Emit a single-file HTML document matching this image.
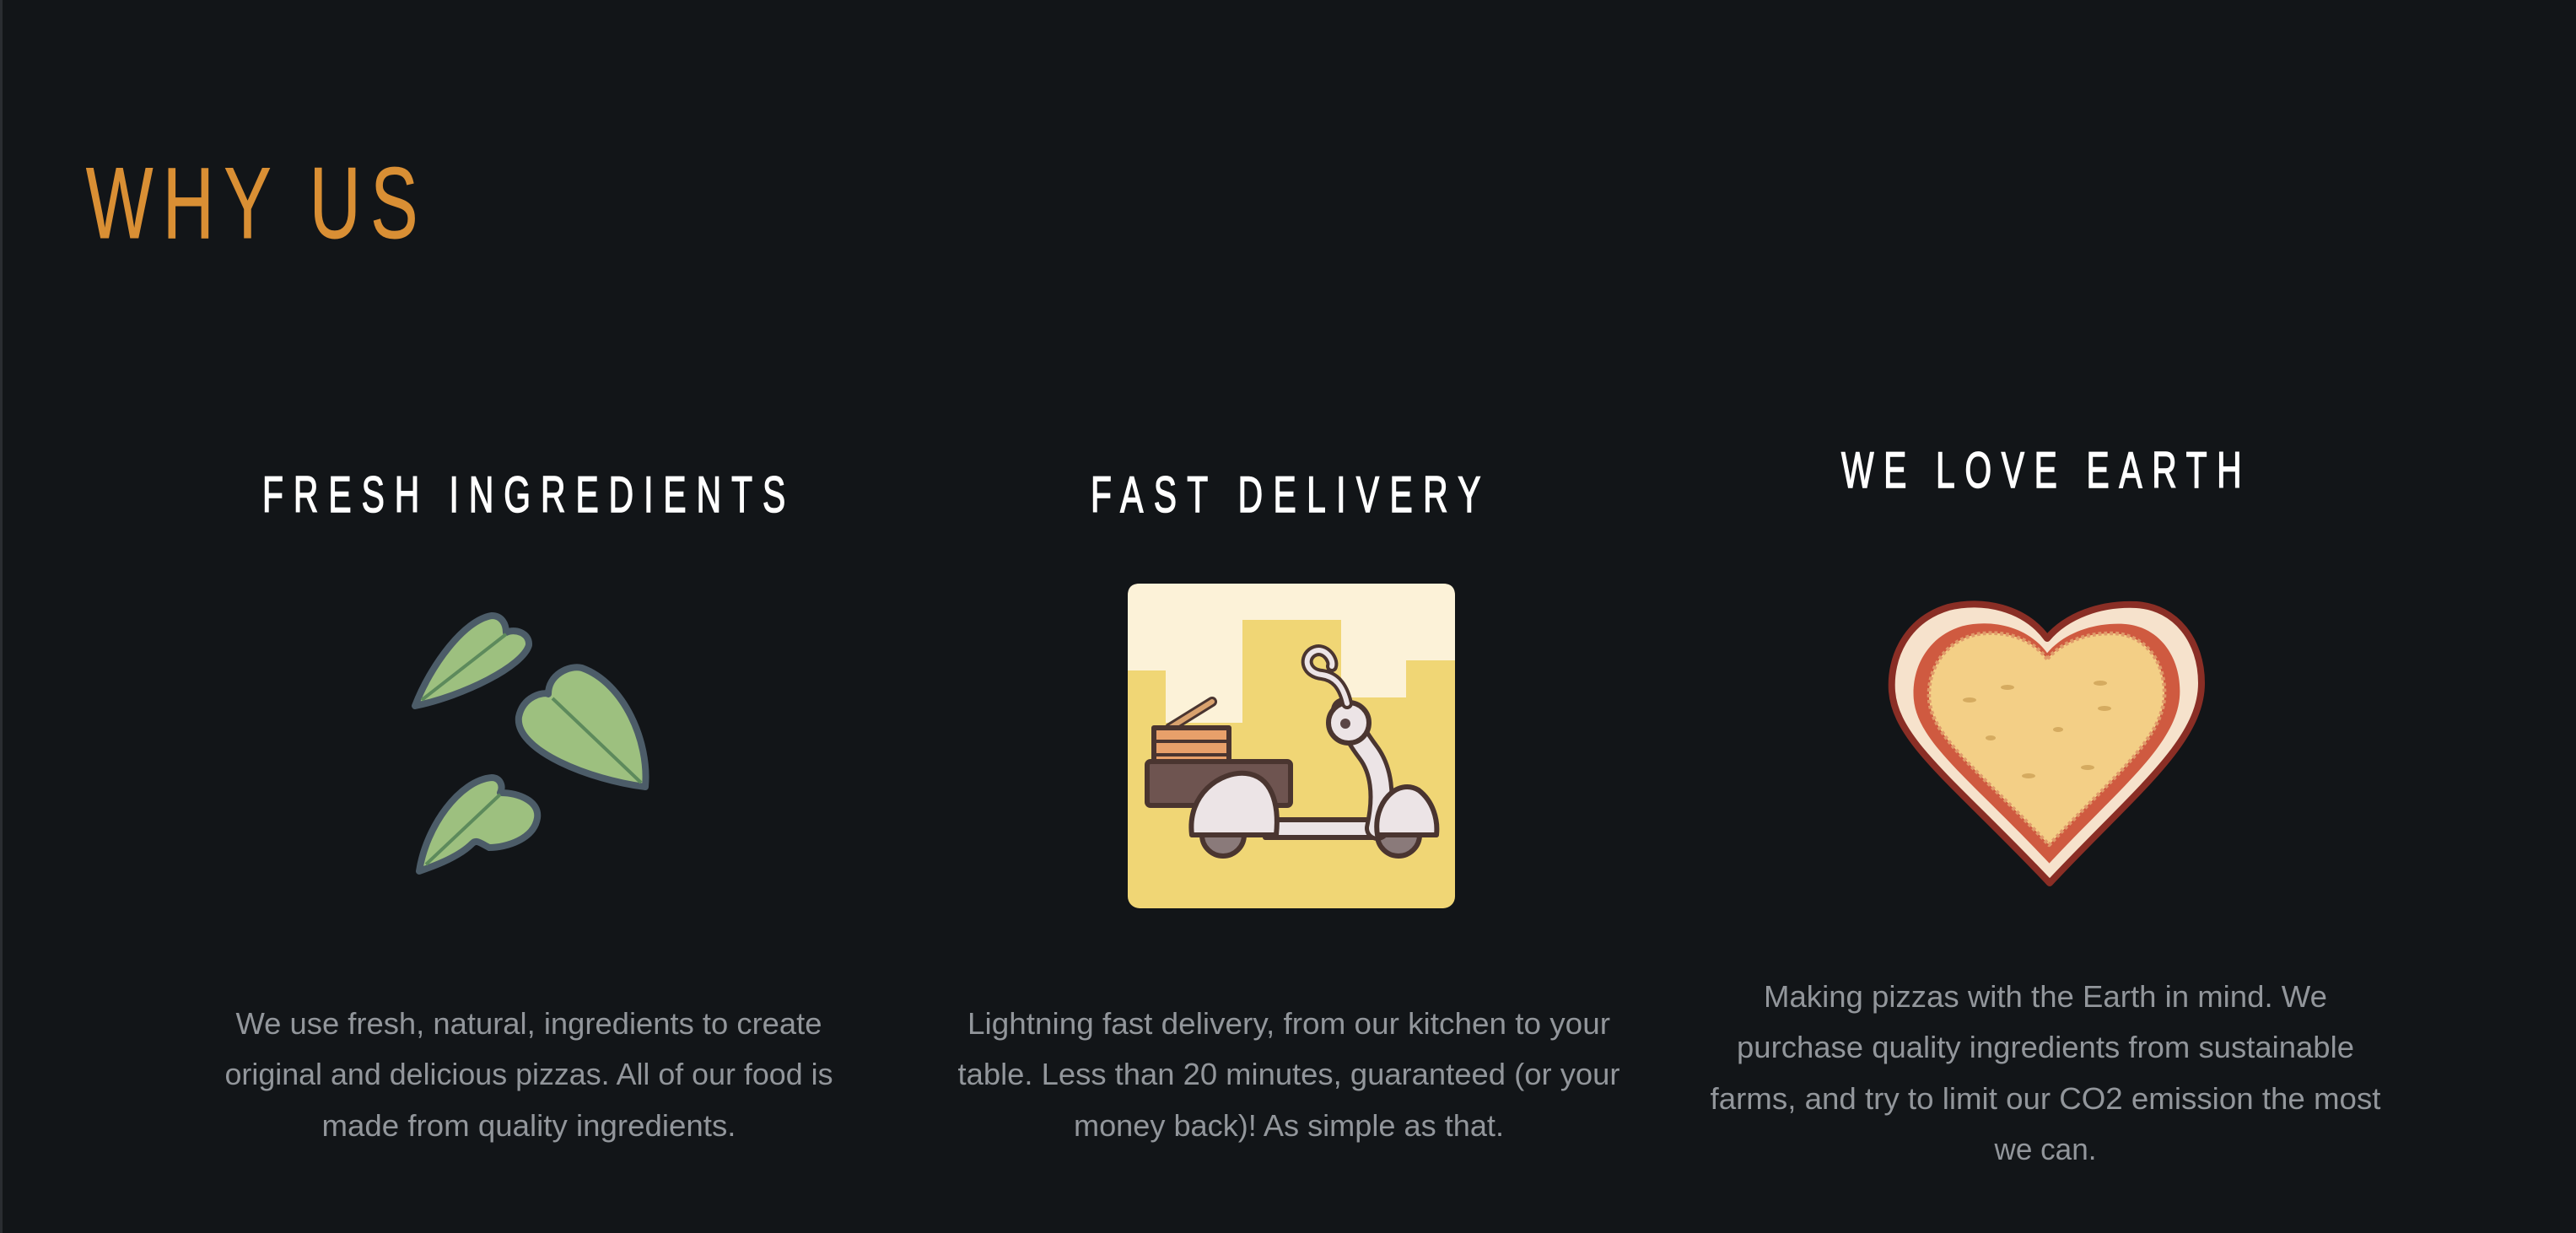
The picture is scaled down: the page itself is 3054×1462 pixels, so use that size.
<!DOCTYPE html>
<html><head><meta charset="utf-8"><style>
html,body{margin:0;padding:0;background:#121518;width:3054px;height:1462px;overflow:hidden}
svg{position:absolute;left:0;top:0}
</style></head><body>
<svg width="3054" height="1462" viewBox="0 0 3054 1462" xmlns="http://www.w3.org/2000/svg">
<rect x="0" y="0" width="3054" height="1462" fill="#121518"/>
<rect x="0" y="0" width="3" height="1462" fill="#2a2d31"/>
<g font-family="Liberation Sans, sans-serif">
<text transform="scale(0.7,1)" x="145.7" y="282" font-size="120" fill="#d98f34" stroke="#d98f34" stroke-width="1" textLength="562" lengthAdjust="spacing">WHY US</text>
<text transform="scale(0.68,1)" x="457.4" y="607" font-size="60" fill="#ffffff" stroke="#ffffff" stroke-width="1.5" textLength="912" lengthAdjust="spacing">FRESH INGREDIENTS</text>
<text transform="scale(0.68,1)" x="1901.5" y="607" font-size="60" fill="#ffffff" stroke="#ffffff" stroke-width="1.5" textLength="680" lengthAdjust="spacing">FAST DELIVERY</text>
<text transform="scale(0.68,1)" x="3210.3" y="578" font-size="60" fill="#ffffff" stroke="#ffffff" stroke-width="1.5" textLength="698" lengthAdjust="spacing">WE LOVE EARTH</text>
</g>
<g font-family="Liberation Sans, sans-serif" font-size="36" fill="#92969b" text-anchor="middle">
<text x="627" y="1226" textLength="695" lengthAdjust="spacingAndGlyphs">We use fresh, natural, ingredients to create</text>
<text x="627" y="1286" textLength="721" lengthAdjust="spacingAndGlyphs">original and delicious pizzas. All of our food is</text>
<text x="627" y="1347" textLength="491" lengthAdjust="spacingAndGlyphs">made from quality ingredients.</text>
<text x="1528" y="1226" textLength="762" lengthAdjust="spacingAndGlyphs">Lightning fast delivery, from our kitchen to your</text>
<text x="1528" y="1286" textLength="785" lengthAdjust="spacingAndGlyphs">table. Less than 20 minutes, guaranteed (or your</text>
<text x="1528" y="1347" textLength="510" lengthAdjust="spacingAndGlyphs">money back)! As simple as that.</text>
<text x="2425" y="1194" textLength="668" lengthAdjust="spacingAndGlyphs">Making pizzas with the Earth in mind. We</text>
<text x="2425" y="1254" textLength="732" lengthAdjust="spacingAndGlyphs">purchase quality ingredients from sustainable</text>
<text x="2425" y="1315" textLength="795" lengthAdjust="spacingAndGlyphs">farms, and try to limit our CO2 emission the most</text>
<text x="2425" y="1375" textLength="121" lengthAdjust="spacingAndGlyphs">we can.</text>
</g>
<!-- leaves -->
<g transform="translate(450,700)" stroke="#4c5c68" stroke-width="8" fill="#9dc07f" stroke-linejoin="round">
<path d="M42,137 C60,90 100,35 133,30 C145,30 150,40 150,50 C160,45 178,50 177,65 C170,90 100,125 42,137Z"/>
<path d="M315,233 C250,225 160,190 165,150 C170,125 195,120 200,123 C200,100 225,88 240,92 C290,110 320,180 315,233Z"/>
<path d="M47,333 C55,280 95,225 133,222 C143,222 147,232 143,240 C165,240 190,250 187,270 C183,295 150,305 130,305 C120,300 115,295 110,300 C95,315 70,325 47,333Z"/>
<g stroke="#5d8a5c" stroke-width="4" fill="none">
<path d="M50,130 L150,52"/><path d="M205,128 L310,228"/><path d="M55,325 L143,242"/>
</g>
</g>
<!-- scooter -->
<g transform="translate(1337,692)">
<rect x="0" y="0" width="388" height="385" rx="14" fill="#f0d675"/>
<path d="M14,0 H374 Q388,0 388,14 V91 H330 V135 H253 V43 H136 V165 H45 V103 H0 V14 Q0,0 14,0Z" fill="#fcf2d8"/>
<g stroke="#4a3530" stroke-width="6" stroke-linejoin="round" stroke-linecap="round">
<path d="M50,171 L100,140" stroke="#4a3530" stroke-width="12"/>
<path d="M50,171 L100,140" stroke="#d9a26e" stroke-width="6"/>
<rect x="31" y="171" width="89" height="47" fill="#e8a06a"/>
<path d="M31,187 H120 M31,203 H120" stroke-width="4"/>
<rect x="23" y="211" width="170" height="52" rx="4" fill="#6e5450"/>
<circle cx="113" cy="298" r="25" fill="#8a7a7a"/>
<circle cx="321" cy="298" r="25" fill="#8a7a7a"/>
<path d="M163,280 H296 V301 H163Z" fill="#ece4e6"/>
<path d="M296,290 C305,250 300,220 285,200 C270,180 262,165 256,150" fill="none" stroke-width="30"/>
<path d="M296,290 C305,250 300,220 285,200 C270,180 262,165 256,150" fill="none" stroke="#ece4e6" stroke-width="20"/>
<path d="M76,298 C70,250 110,222 140,225 C170,228 180,260 176,298Z" fill="#ece4e6"/>
<path d="M296,298 C290,260 320,230 345,245 C362,258 368,280 366,298Z" fill="#ece4e6"/>
<circle cx="262" cy="165" r="24" fill="#ece4e6"/>
<circle cx="258" cy="166" r="6" fill="#5a4545" stroke="none"/>
<path d="M260,142 C255,120 245,110 230,108 C212,106 208,90 218,82 C232,72 245,90 242,98" fill="none" stroke-width="14"/>
<path d="M260,142 C255,120 245,110 230,108 C212,106 208,90 218,82 C232,72 245,90 242,98" fill="none" stroke="#ece4e6" stroke-width="6"/>
</g>
</g>
<!-- heart -->
<g transform="translate(2200,680)" stroke-linejoin="round">
<path d="M227,77 C200,40 150,30 110,40 C60,55 40,100 43,140 C48,200 120,250 230,367 C330,260 410,200 410,130 C410,80 380,40 333,37 C290,35 250,50 227,77Z" fill="#f6e2cc" stroke="#8a2e25" stroke-width="8"/>
<g transform="translate(227,200) scale(0.86) translate(-227,-200)">
<path d="M227,77 C200,40 150,30 110,40 C60,55 40,100 43,140 C48,200 120,250 230,367 C330,260 410,200 410,130 C410,80 380,40 333,37 C290,35 250,50 227,77Z" fill="#cf5a40"/>
</g>
<g transform="translate(227,195) scale(0.76) translate(-227,-200)">
<path d="M227,77 C200,40 150,30 110,40 C60,55 40,100 43,140 C48,200 120,250 230,367 C330,260 410,200 410,130 C410,80 380,40 333,37 C290,35 250,50 227,77Z" fill="#f3cf86" stroke="#e09a6a" stroke-width="6" stroke-dasharray="5 4"/>
</g>
<g fill="#d5ab60">
<ellipse cx="135" cy="150" rx="8" ry="3"/><ellipse cx="180" cy="135" rx="8" ry="3"/><ellipse cx="290" cy="130" rx="8" ry="3"/><ellipse cx="295" cy="160" rx="8" ry="3"/><ellipse cx="240" cy="185" rx="6" ry="3"/><ellipse cx="275" cy="230" rx="8" ry="3"/><ellipse cx="205" cy="240" rx="8" ry="3"/><ellipse cx="160" cy="195" rx="6" ry="3"/>
</g>
</g>
</svg>
</body></html>
